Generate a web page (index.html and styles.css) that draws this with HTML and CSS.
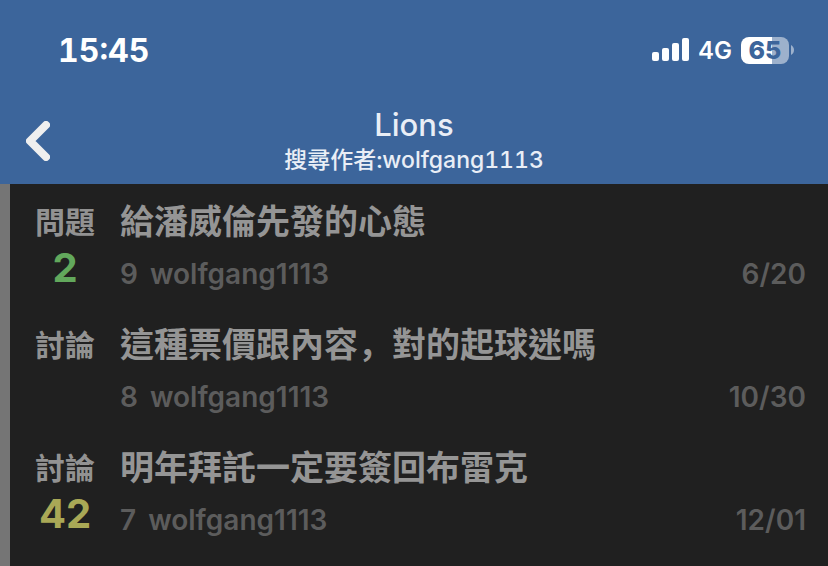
FILE: index.html
```html
<!DOCTYPE html>
<html lang="zh-Hant">
<head>
  <meta charset="UTF-8" />
  <meta name="viewport" content="width=device-width, initial-scale=1" />
  <title>Lions</title>
  <link rel="stylesheet" href="styles.css">
</head>
<body>
  <header>
    <div class="status-bar">
      <span class="time">15:45</span>
      <div class="status-icons">
        <svg class="signal" width="37" height="24" viewBox="0 0 37 24" fill="#fff">
          <rect x="0" y="14" width="7" height="9" rx="2" />
          <rect x="10" y="10" width="7" height="13" rx="2" />
          <rect x="20" y="5" width="7" height="18" rx="2" />
          <rect x="30" y="0" width="7" height="23" rx="2" />
        </svg>
        <span class="network">4G</span>
        <div class="battery">
          <span class="battery-level">65</span>
          <svg width="3" height="10" viewBox="0 0 3 10" fill="#9db1cc">
            <path d="M0 0 C4 2 4 8 0 10 Z" />
          </svg>
        </div>
      </div>
    </div>

    <nav class="nav-bar">
      <button type="button" class="back" aria-label="返回">
        <svg width="24" height="40" viewBox="0 0 24 40" fill="none" stroke="#efefef" stroke-width="8" stroke-linecap="round" stroke-linejoin="round">
          <path d="M20 4 L4 20 L20 36" />
        </svg>
      </button>
      <div class="heading">
        <h1>Lions</h1>
        <p>搜尋作者:wolfgang1113</p>
      </div>
    </nav>
  </header>

  <main>
    <article class="post">
      <div class="post-side">
        <span class="category">問題</span>
        <span class="score green">2</span>
      </div>
      <div class="post-body">
        <h2>給潘威倫先發的心態</h2>
        <div class="meta">
          <span>9</span>
          <span>wolfgang1113</span>
          <time>6/20</time>
        </div>
      </div>
    </article>

    <article class="post">
      <div class="post-side">
        <span class="category">討論</span>
      </div>
      <div class="post-body">
        <h2>這種票價跟內容<span class="comma" lang="zh-Hans">，</span>對的起球迷嗎</h2>
        <div class="meta">
          <span>8</span>
          <span>wolfgang1113</span>
          <time>10/30</time>
        </div>
      </div>
    </article>

    <article class="post">
      <div class="post-side">
        <span class="category">討論</span>
        <span class="score yellow">42</span>
      </div>
      <div class="post-body">
        <h2>明年拜託一定要簽回布雷克</h2>
        <div class="meta">
          <span>7</span>
          <span>wolfgang1113</span>
          <time>12/01</time>
        </div>
      </div>
    </article>
  </main>
</body>
</html>
```
FILE: styles.css
```css
body {
  display: flex;
  flex-direction: column;
  min-height: 100vh;
  margin: 0;
  font-family: Inter, "Noto Sans CJK TC", sans-serif;
  font-weight: 500;
  background: #202020;
}
h1, h2, p {
  margin: 0;
}

header {
  background: #3c659b;
  color: #fff;
}
.status-bar {
  display: flex;
  justify-content: space-between;
  align-items: center;
  padding: 30px 34px 0 58px;
  height: 40px;
}
.time {
  font-size: 32px;
  font-weight: 700;
  font-variant-numeric: tabular-nums;
}
.status-icons {
  display: flex;
  align-items: center;
  gap: 9px;
}
.network {
  font-size: 24px;
  font-weight: 600;
}
.battery {
  display: flex;
  align-items: center;
  gap: 2px;
}
.battery-level {
  width: 48px;
  border-radius: 8px;
  background: linear-gradient(to right, #fff 65%, #9db1cc 65%);
  color: #3c659b;
  font-size: 25px;
  line-height: 27px;
  font-weight: 800;
  text-align: center;
}

.nav-bar {
  display: grid;
  grid-template-columns: 100px 1fr 100px;
  align-items: center;
  padding: 36px 0 8px;
  color: #e9eef6;
}
.back {
  display: flex;
  padding: 0 26px;
  border: none;
  background: none;
  cursor: pointer;
}
.heading {
  text-align: center;
}
h1 {
  font-size: 31px;
  line-height: 38px;
  font-weight: 500;
}
.heading p {
  font-size: 23px;
  line-height: 32px;
  font-variant-numeric: tabular-nums;
}

main {
  flex: 1;
  border-left: 10px solid #757575;
}
.post {
  display: flex;
  padding: 16px 22px 15px 20px;
}
.post-side {
  display: flex;
  flex-direction: column;
  align-items: center;
  gap: 4px;
  width: 70px;
  margin-right: 20px;
}
.category {
  color: #929292;
  font-size: 30px;
  line-height: 44px;
  font-weight: 600;
}
.score {
  font-size: 40px;
  line-height: 40px;
  font-weight: 700;
}
.green {
  color: #62a85c;
}
.yellow {
  color: #a9a856;
}
.post-body {
  flex: 1;
}
h2 {
  color: #959595;
  font-size: 34px;
  line-height: 44px;
  font-weight: 600;
}
/* comma sits bottom left instead of centred */
.comma {
  font-family: Inter, "Noto Sans CJK SC", sans-serif;
}
.meta {
  display: flex;
  gap: 12px;
  margin-top: 12px;
  color: #5c5c5c;
  font-size: 28px;
  line-height: 36px;
  font-weight: 600;
}
.meta time {
  margin-left: auto;
}
```
